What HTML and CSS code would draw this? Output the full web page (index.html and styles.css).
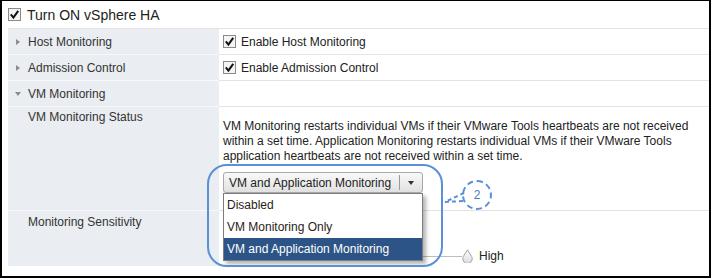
FILE: index.html
```html
<!DOCTYPE html>
<html>

<head>
  <title>vSphere HA Settings</title>
  <link rel="stylesheet" href="styles.css">
</head>

<body>

  <div class="frame">
    <div class="title-row">
      <svg class="checkbox" width="13" height="13" viewBox="0 0 13 13">
        <rect x="0.5" y="0.5" width="12" height="12" fill="#f4f4f4" stroke="#8a8a8a" />
        <path d="M2.8 6.4 L5.4 9.6 L10.2 2.8" fill="none" stroke="#111" stroke-width="2" />
      </svg>
      <span class="title-text">Turn ON vSphere HA</span>
    </div>

    <div class="settings">
      <div class="row row-short">
        <div class="label"><span class="arrow arrow-right"></span>Host Monitoring</div>
        <div class="value">
          <svg class="checkbox" width="13" height="13" viewBox="0 0 13 13">
            <rect x="0.5" y="0.5" width="12" height="12" fill="#f4f4f4" stroke="#8a8a8a" />
            <path d="M2.8 6.4 L5.4 9.6 L10.2 2.8" fill="none" stroke="#111" stroke-width="2" />
          </svg>
          <span>Enable Host Monitoring</span>
        </div>
      </div>

      <div class="row row-short">
        <div class="label"><span class="arrow arrow-right"></span>Admission Control</div>
        <div class="value">
          <svg class="checkbox" width="13" height="13" viewBox="0 0 13 13">
            <rect x="0.5" y="0.5" width="12" height="12" fill="#f4f4f4" stroke="#8a8a8a" />
            <path d="M2.8 6.4 L5.4 9.6 L10.2 2.8" fill="none" stroke="#111" stroke-width="2" />
          </svg>
          <span>Enable Admission Control</span>
        </div>
      </div>

      <div class="row row-short">
        <div class="label"><span class="arrow arrow-down"></span>VM Monitoring</div>
        <div class="value"></div>
      </div>

      <div class="row row-status">
        <div class="label label-sub">VM Monitoring Status</div>
        <div class="value value-top">
          <p class="desc">VM Monitoring restarts individual VMs if their VMware Tools heartbeats are not received
            within a set time. Application Monitoring restarts individual VMs if their VMware Tools
            application heartbeats are not received within a set time.</p>

          <div class="select-wrap">
            <div class="select">
              <span class="select-text">VM and Application Monitoring</span>
              <span class="select-btn"><span class="select-arrow"></span></span>
            </div>
            <div class="menu">
              <div class="menu-item">Disabled</div>
              <div class="menu-item">VM Monitoring Only</div>
              <div class="menu-item menu-item-selected">VM and Application Monitoring</div>
            </div>
            <div class="annot"></div>
            <svg class="annot-tail" width="24" height="14" viewBox="0 0 24 14">
              <path d="M21 2 L2 11 L20 10" fill="none" stroke="#5b8fd6" stroke-width="2" stroke-dasharray="4 3" />
            </svg>
            <div class="callout">2</div>
          </div>
        </div>
      </div>

      <div class="row row-sens">
        <div class="label label-sub label-sens">Monitoring Sensitivity</div>
        <div class="value value-last">
          <div class="slider">
            <span class="track"></span>
            <svg class="thumb" width="11" height="14" viewBox="0 0 11 14">
              <defs>
                <linearGradient id="thumbFill" x1="0" y1="0" x2="0" y2="1">
                  <stop offset="0" stop-color="#ffffff" />
                  <stop offset="1" stop-color="#dcdcdc" />
                </linearGradient>
              </defs>
              <path d="M5.5 0.8 L9.6 7.4 A4.7 4.7 0 1 1 1.4 7.4 Z" fill="url(#thumbFill)" stroke="#a2a2a2" />
            </svg>
            <span class="slider-label">High</span>
          </div>
        </div>
      </div>
    </div>
  </div>

</body>

</html>
```

FILE: styles.css
```css
* {
  font-family: "Liberation Sans", Arial, sans-serif;
  box-sizing: border-box;
}

body {
  margin: 0;
  background-color: #ffffff;
}

/* Outer frame */
.frame {
  position: relative;
  width: 711px;
  height: 278px;
  border-style: solid;
  border-color: #000000;
  border-width: 1px 2px 2px 2px;
  background-color: #ffffff;
  overflow: hidden;
}

/* Title */
.title-row {
  display: flex;
  align-items: center;
  gap: 6px;
  height: 27px;
  padding-left: 6px;
}

.title-text {
  font-size: 14px;
  color: #222222;
}

.checkbox {
  display: block;
  flex: none;
}

/* Settings table */
.settings {
  margin-left: 6px;
  border-top: 1px solid #e3e3e3;
}

.row {
  display: flex;
}

.row-short {
  height: 26px;
}

.row-status {
  height: 104px;
}

.row-sens {
  height: 55px;
}

.label {
  display: flex;
  align-items: center;
  width: 211px;
  flex: none;
  padding-left: 8px;
  background-color: #eaedf1;
  border-bottom: 1px solid #f7f8fa;
  font-size: 12px;
  color: #333333;
}

.label-sub {
  align-items: flex-start;
  padding-left: 20px;
  padding-top: 3px;
  line-height: 15px;
}

.label-sens {
  padding-top: 4px;
  border-bottom: none;
}

.arrow {
  width: 12px;
  flex: none;
}

.arrow-right::before {
  content: "";
  display: block;
  width: 0;
  height: 0;
  border-top: 3px solid transparent;
  border-bottom: 3px solid transparent;
  border-left: 4px solid #8c8c8c;
}

.arrow-down::before {
  content: "";
  display: block;
  width: 0;
  height: 0;
  margin-left: -1px;
  border-left: 3px solid transparent;
  border-right: 3px solid transparent;
  border-top: 4px solid #8c8c8c;
}

.value {
  display: flex;
  align-items: center;
  gap: 5px;
  flex: 1;
  padding-left: 4px;
  border-bottom: 1px solid #e3e3e3;
  font-size: 12px;
  color: #222222;
}

.value-top {
  flex-direction: column;
  align-items: flex-start;
  gap: 0;
  padding-top: 12px;
}

.value-last {
  align-items: flex-start;
  border-bottom: none;
}

.desc {
  margin: 0;
  max-width: 485px;
  font-size: 12px;
  line-height: 15px;
  color: #222222;
}

/* Dropdown */
.select-wrap {
  position: relative;
  width: 200px;
  margin-top: 8px;
}

.select {
  display: flex;
  align-items: center;
  height: 21px;
  padding-left: 5px;
  border: 1px solid #a9a9a9;
  border-radius: 3px;
  background: linear-gradient(#f9f9f9, #e1e1e1);
}

.select-text {
  flex: 1;
  font-size: 12px;
  color: #222222;
}

.select-btn {
  display: flex;
  align-items: center;
  justify-content: center;
  width: 23px;
  height: 15px;
  border-left: 1px solid #9a9a9a;
}

.select-arrow {
  width: 0;
  height: 0;
  border-left: 3px solid transparent;
  border-right: 3px solid transparent;
  border-top: 4px solid #333333;
}

.menu {
  position: absolute;
  top: 21px;
  left: 0;
  width: 200px;
  background-color: #ffffff;
  border: 1px solid #7d7d7d;
  box-shadow: 3px 3px 4px rgba(0, 0, 0, 0.3);
  z-index: 2;
}

.menu-item {
  height: 22px;
  line-height: 22px;
  padding-left: 3px;
  font-size: 12px;
  color: #2a2218;
}

.menu-item-selected {
  background-color: #2d5486;
  color: #ffffff;
}

/* Annotation callout */
.annot {
  position: absolute;
  left: -16px;
  top: -8px;
  width: 236px;
  height: 103px;
  border: 2px solid #5b8fd6;
  border-radius: 20px;
  z-index: 3;
}

.annot-tail {
  position: absolute;
  left: 220px;
  top: 19px;
  z-index: 3;
}

.callout {
  position: absolute;
  left: 239px;
  top: 8px;
  width: 30px;
  height: 30px;
  display: flex;
  align-items: center;
  justify-content: center;
  border: 2px dashed #5b8fd6;
  border-radius: 50%;
  font-size: 12px;
  color: #4a7cc4;
  z-index: 3;
}

/* Sensitivity slider */
.slider {
  display: flex;
  align-items: center;
  height: 14px;
  margin-top: 38px;
}

.track {
  width: 239px;
  height: 1px;
  background-color: #bdbdbd;
}

.thumb {
  display: block;
  flex: none;
}

.slider-label {
  margin-left: 6px;
  font-size: 12px;
  color: #222222;
}
```
